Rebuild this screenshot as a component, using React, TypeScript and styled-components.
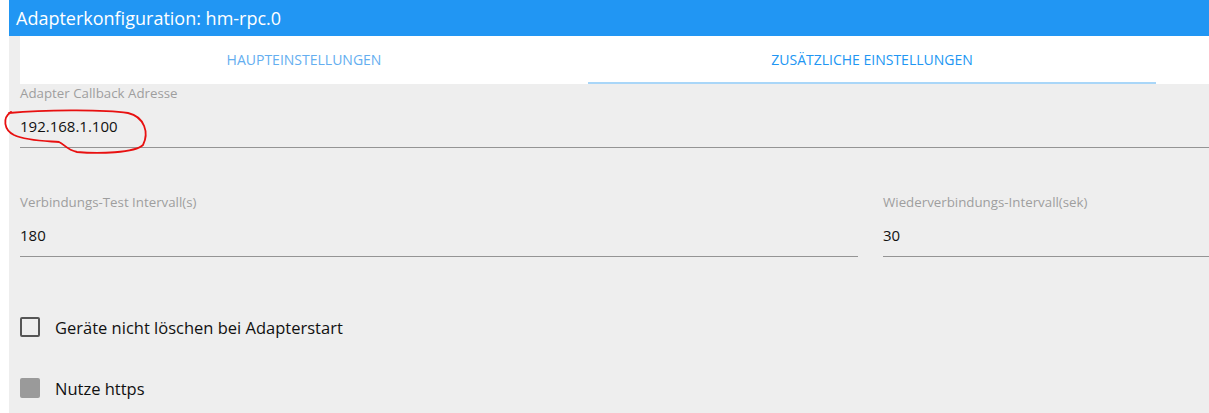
import React from 'react';
import styled, { createGlobalStyle } from 'styled-components';

const GlobalStyle = createGlobalStyle`
  html, body {
    margin: 0;
    padding: 0;
    background: #ffffff;
  }
  body {
    font-family: 'Open Sans', 'Noto Sans', sans-serif;
  }
`;

const tabs = [
  { label: 'Haupteinstellungen', active: false },
  { label: 'Zusätzliche Einstellungen', active: true }
];

function Field({ label, value, grow }: { label: string; value: string; grow?: number }) {
  return (
    <S.Field grow={grow}>
      <S.Label>{label}</S.Label>
      <S.Input>{value}</S.Input>
    </S.Field>
  );
}

function App() {
  return (
    <>
      <GlobalStyle />
      <S.Page>
        <S.Header>Adapterkonfiguration: hm-rpc.0</S.Header>
        <S.Content>
          <S.TabBar>
            {tabs.map((t) => (
              <S.Tab key={t.label} active={t.active}>
                {t.label}
              </S.Tab>
            ))}
          </S.TabBar>
          <S.Form>
            <S.Row first>
              <Field label='Adapter Callback Adresse' value='192.168.1.100' />
            </S.Row>
            <S.Row>
              <Field label='Verbindungs-Test Intervall(s)' value='180' grow={838} />
              <Field label='Wiederverbindungs-Intervall(sek)' value='30' grow={326} />
            </S.Row>
            <S.Checks>
              <S.CheckRow>
                <S.Box />
                <S.CheckText>Geräte nicht löschen bei Adapterstart</S.CheckText>
              </S.CheckRow>
              <S.CheckRow>
                <S.Box disabled />
                <S.CheckText>Nutze https</S.CheckText>
              </S.CheckRow>
            </S.Checks>
          </S.Form>
          <S.Scribble width='150' height='50' viewBox='0 0 150 50'>
            <path
              d='M7 4 C40 1, 100 0, 126 4 C143 8, 147 24, 141 36 C133 44, 96 45, 75 43 C65 41, 62 35, 57 33 C45 32, 25 32, 12 26 C2 21, 0 9, 9 3'
              fill='none'
              stroke='#e81010'
              strokeWidth='1.8'
              strokeLinecap='round'
            />
          </S.Scribble>
        </S.Content>
      </S.Page>
    </>
  );
}

const S: {
  Page: any;
  Header: any;
  Content: any;
  TabBar: any;
  Tab: any;
  Form: any;
  Row: any;
  Field: any;
  Label: any;
  Input: any;
  Checks: any;
  CheckRow: any;
  Box: any;
  CheckText: any;
  Scribble: any;
} = {
  Page: styled.div`
    margin-left: 9px;
    height: 413px;
    display: flex;
    flex-direction: column;
  `,
  Header: styled.div`
    height: 36px;
    line-height: 36px;
    padding-left: 7px;
    background-color: #2196f3;
    color: #ffffff;
    font-size: 18px;
  `,
  Content: styled.div`
    position: relative;
    flex: 1;
    background-color: #eeeeee;
    padding-left: 11px;
  `,
  TabBar: styled.div`
    display: flex;
    height: 48px;
    background-color: #ffffff;
  `,
  Tab: styled.div<{ active?: boolean }>`
    width: 568px;
    display: flex;
    align-items: center;
    justify-content: center;
    box-sizing: border-box;
    font-size: 14px;
    text-transform: uppercase;
    color: ${({ active }) => (active ? '#2196f3' : '#64aef0')};
    border-bottom: 2px solid ${({ active }) => (active ? '#a9d6f8' : 'transparent')};
  `,
  Form: styled.div`
    display: flex;
    flex-direction: column;
  `,
  Row: styled.div<{ first?: boolean }>`
    display: flex;
    gap: 25px;
    margin-top: ${({ first }) => (first ? '2px' : '47px')};
  `,
  Field: styled.div<{ grow?: number }>`
    flex: ${({ grow }) => (grow ? `${grow} 1 0` : '1 1 0')};
    display: flex;
    flex-direction: column;
  `,
  Label: styled.div`
    font-size: 13.3px;
    line-height: 14px;
    color: #9e9e9e;
  `,
  Input: styled.div`
    height: 31px;
    padding-top: 16px;
    line-height: 20px;
    font-size: 15px;
    color: #111111;
    border-bottom: 1px solid #949494;
  `,
  Checks: styled.div`
    display: flex;
    flex-direction: column;
    gap: 41px;
    margin-top: 60px;
  `,
  CheckRow: styled.div`
    display: flex;
    align-items: center;
    height: 20px;
    gap: 15px;
  `,
  Box: styled.div<{ disabled?: boolean }>`
    width: 20px;
    height: 20px;
    box-sizing: border-box;
    border-radius: 2px;
    border: 2px solid ${({ disabled }) => (disabled ? '#9a9a9a' : '#555555')};
    background-color: ${({ disabled }) => (disabled ? '#9a9a9a' : 'transparent')};
  `,
  CheckText: styled.div`
    font-size: 16.5px;
    color: #111111;
  `,
  Scribble: styled.svg`
    position: absolute;
    left: -7px;
    top: 73px;
  `
};

export default App;
